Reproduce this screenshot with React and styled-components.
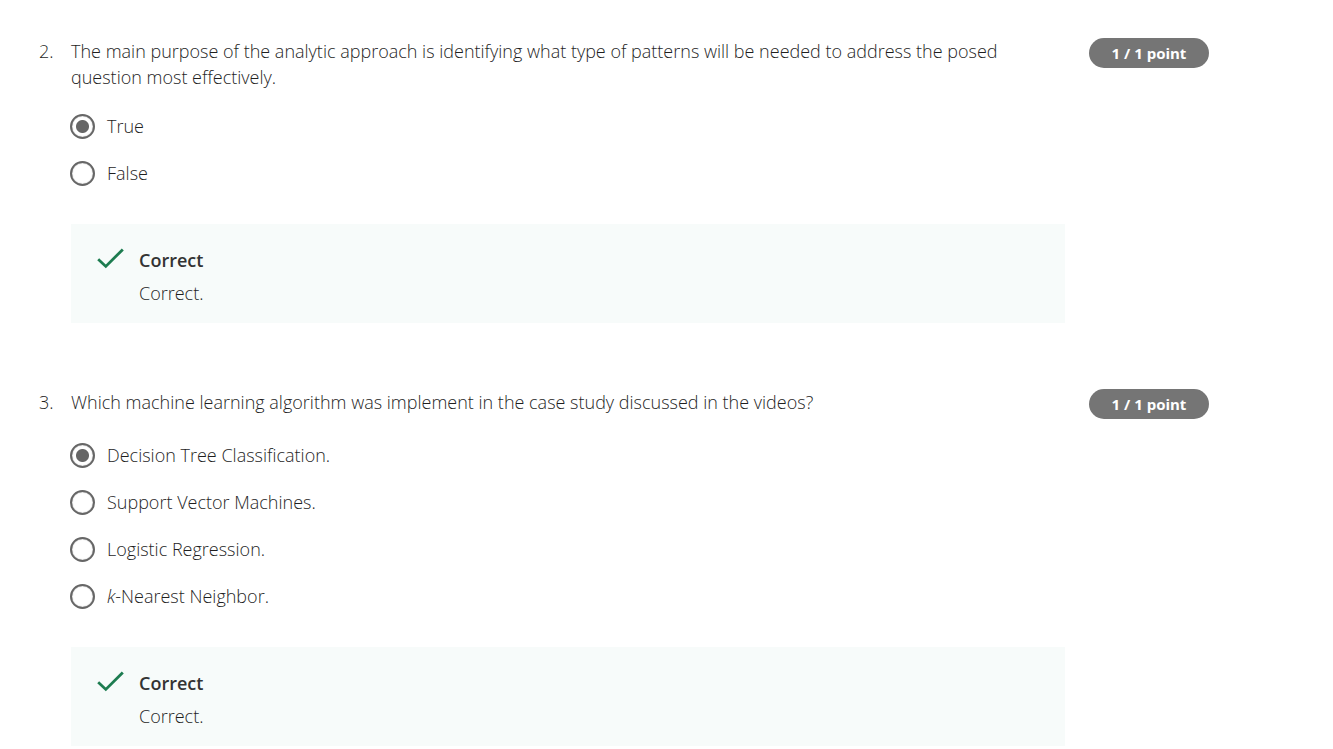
import React from "react";
import styled, { createGlobalStyle } from "styled-components";

const GlobalStyle = createGlobalStyle`
  *, *::before, *::after { box-sizing: border-box; }
  body {
    margin: 0;
    background: #fff;
    color: #1f1f1f;
    font: 300 18px/26px "Open Sans", "Noto Sans", sans-serif;
  }
`;

const Quiz = styled.main`
  display: flex;
  flex-direction: column;
  gap: 66px;
  padding: 38px 124px 2px 39px;
`;

const Question = styled.section`
  display: grid;
  grid-template-columns: 32px minmax(0, 1fr) 120px;
`;

const Number = styled.span``;

const Prompt = styled.p`
  margin: 0;
  padding-right: 24px;
`;

const Points = styled.span`
  align-self: start;
  height: 30px;
  border-radius: 15px;
  background: #757575;
  color: #fff;
  font-size: 15px;
  font-weight: 700;
  line-height: 30px;
  text-align: center;
`;

const Answer = styled.div`
  grid-column: 2;
  margin-right: 24px;
`;

const Options = styled.fieldset`
  display: flex;
  flex-direction: column;
  align-items: flex-start;
  gap: 21px;
  min-width: 0;
  margin: 0 0 38px;
  padding: 23px 0 0;
  border: 0;
`;

const Option = styled.label`
  display: flex;
  align-items: center;
  gap: 12px;
  margin-left: -1px;
  cursor: pointer;
`;

const Radio = styled.input`
  appearance: none;
  width: 25px;
  height: 25px;
  margin: 0;
  border: 2px solid #666;
  border-radius: 50%;
  box-shadow: inset 0 0 1px #666;

  &:checked {
    background: radial-gradient(circle, #666 6px, transparent 7px);
  }
`;

const Feedback = styled.div`
  display: flex;
  gap: 14px;
  min-height: 99px;
  padding: 23px 26px 16px;
  background: #f7fbfa;
`;

const Check = styled.svg`
  flex: none;
  width: 28px;
  height: 24px;
`;

const FeedbackTitle = styled.strong`
  display: block;
  margin-bottom: 7px;
  color: #333;
  font-weight: 600;
`;

const FeedbackText = styled.p`
  margin: 0;
`;

const questions = [
  {
    number: 2,
    prompt:
      "The main purpose of the analytic approach is identifying what type of patterns will be needed to address the posed question most effectively.",
    options: ["True", "False"],
  },
  {
    number: 3,
    prompt:
      "Which machine learning algorithm was implement in the case study discussed in the videos?",
    options: [
      "Decision Tree Classification.",
      "Support Vector Machines.",
      "Logistic Regression.",
      <><i>k</i>-Nearest Neighbor.</>,
    ],
  },
];

export default function App() {
  return (
    <>
      <GlobalStyle />
      <Quiz>
        {questions.map(({ number, prompt, options }) => (
          <Question key={number}>
            <Number>{number}.</Number>
            <Prompt id={`prompt-${number}`}>{prompt}</Prompt>
            <Points>1 / 1 point</Points>
            <Answer>
              <Options aria-labelledby={`prompt-${number}`}>
                {options.map((option, i) => (
                  <Option key={i} htmlFor={`q${number}-${i}`}>
                    <Radio
                      type="radio"
                      id={`q${number}-${i}`}
                      name={`q${number}`}
                      defaultChecked={i === 0}
                    />
                    <span>{option}</span>
                  </Option>
                ))}
              </Options>
              <Feedback>
                <Check viewBox="0 0 28 24" aria-hidden="true">
                  <path d="M1.2 12.2 8.8 19.4 25.8 2.4" fill="none" stroke="#1d7c50" strokeWidth="2.8" />
                </Check>
                <div>
                  <FeedbackTitle>Correct</FeedbackTitle>
                  <FeedbackText>Correct.</FeedbackText>
                </div>
              </Feedback>
            </Answer>
          </Question>
        ))}
      </Quiz>
    </>
  );
}
